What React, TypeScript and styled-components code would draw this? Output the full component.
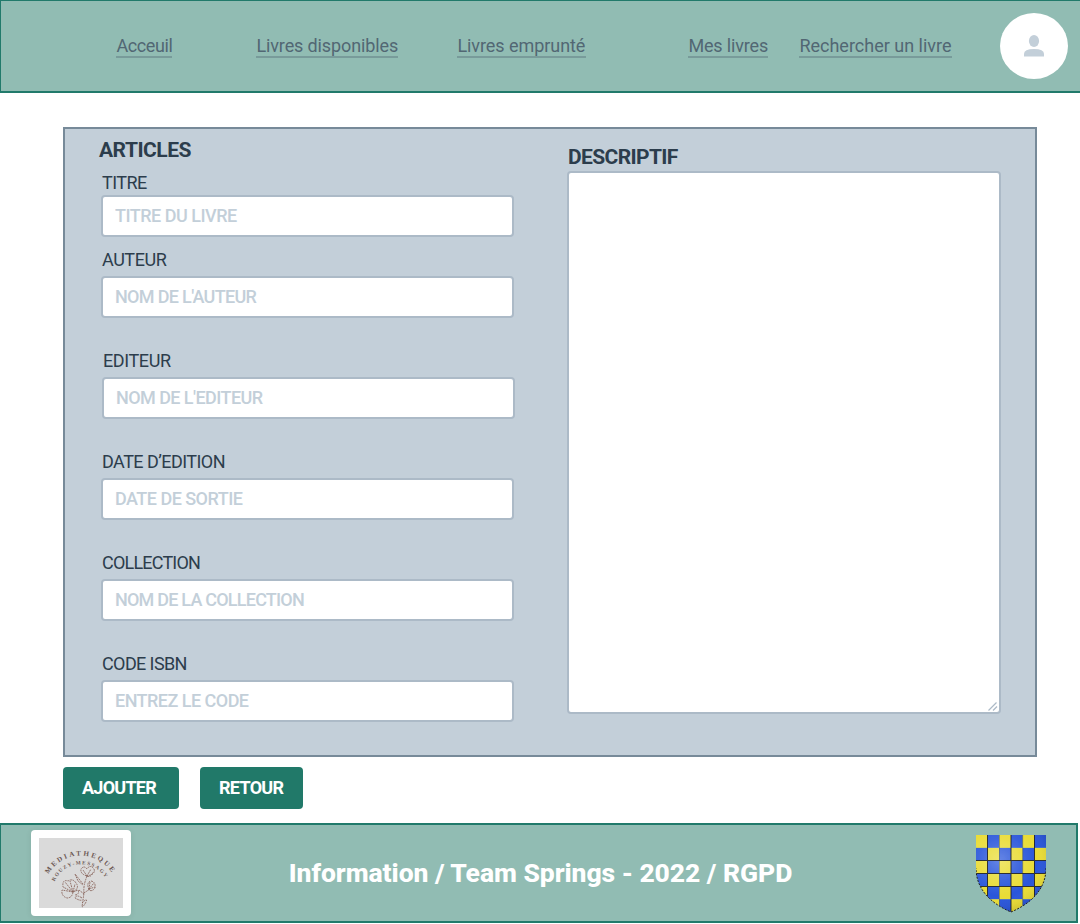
import React, { useId } from 'react';
import styled, { createGlobalStyle } from 'styled-components';

const GlobalStyle = createGlobalStyle`
  *, *::before, *::after { box-sizing: border-box; }
  body { margin: 0; background: #fff; overflow: hidden; font-family: Roboto, "Liberation Sans", sans-serif; color: #2c3d4c; }
`;

const Page = styled.div`
  display: flex;
  flex-direction: column;
  width: 1080px;
  height: 924px;
  overflow: hidden;
`;

const Header = styled.header`
  display: flex;
  align-items: flex-start;
  flex: none;
  height: 93px;
  padding-left: 115px;
  background: #91bcb3;
  border: solid #217a6b;
  border-width: 1px 0 2px 1px;
`;

const NavLink = styled.a<{ $width: number; $gap: number; $spacing: number }>`
  flex: none;
  width: ${p => p.$width}px;
  height: 24px;
  margin-top: 33px;
  margin-right: ${p => p.$gap}px;
  border-bottom: 2px solid #789b9a;
  font-size: 18px;
  line-height: 24px;
  letter-spacing: ${p => p.$spacing}px;
  text-indent: 0.4px;
  white-space: nowrap;
  color: #526773;
`;

const Avatar = styled.div`
  display: flex;
  flex: none;
  align-items: center;
  justify-content: center;
  width: 68px;
  height: 66px;
  margin-top: 12px;
  border-radius: 50%;
  background: #fff;
`;

const Panel = styled.main`
  display: flex;
  flex: none;
  width: 974px;
  height: 630px;
  margin: 34px 0 0 63px;
  border: 2px solid #778a99;
  background: #c3cfd9;
`;

const FormColumn = styled.section`
  width: 413px;
  margin: 8px 53px 0 36px;
`;

const DescriptionColumn = styled.section`
  width: 434px;
  padding-top: 15px;
`;

const Heading = styled.h2<{ $spacing: number; $indent?: number }>`
  margin: 0 0 0 ${p => p.$indent ?? 0}px;
  height: 27px;
  font-size: 21px;
  font-weight: 700;
  line-height: 27px;
  letter-spacing: ${p => p.$spacing}px;
`;

const Field = styled.div<{ $gap: number; $indent?: number }>`
  margin: ${p => p.$gap}px 0 0 ${p => p.$indent ?? 0}px;
`;

const Label = styled.label<{ $pad: number; $spacing: number }>`
  display: block;
  height: 24px;
  padding: 0 0 0 1px;
  margin-bottom: ${p => p.$pad}px;
  font-size: 18px;
  line-height: 24px;
  letter-spacing: ${p => p.$spacing}px;
`;

const Input = styled.input<{ $spacing: number }>`
  display: block;
  width: 413px;
  height: 42px;
  padding: 0 12px 2px;
  border: 2px solid #acbac7;
  border-radius: 4px;
  background: #fff;
  font: 500 18px Roboto, "Liberation Sans", sans-serif;
  letter-spacing: ${p => p.$spacing}px;
  &::placeholder { color: #c3cfd9; opacity: 1; }
`;

const Description = styled.textarea`
  display: block;
  width: 434px;
  height: 543px;
  border: 2px solid #acbac7;
  border-radius: 4px;
  background: #fff;
  resize: none;
`;

const DescriptionBox = styled.div`
  position: relative;
`;

const Grip = styled.svg`
  position: absolute;
  right: 3px;
  bottom: 3px;
`;

const Actions = styled.div`
  display: flex;
  flex: none;
  gap: 21px;
  height: 42px;
  margin: 10px 0 0 63px;
`;

const Button = styled.button<{ $width: number; $spacing: number }>`
  width: ${p => p.$width}px;
  padding: 0 0 2px 19px;
  text-align: left;
  border: 0;
  border-radius: 4px;
  background: #217969;
  color: #fff;
  font: 700 18px Roboto, "Liberation Sans", sans-serif;
  letter-spacing: ${p => p.$spacing}px;
`;

const Footer = styled.footer`
  display: grid;
  flex: none;
  grid-template-columns: 100px 1fr 70px;
  align-items: start;
  width: 1078px;
  height: 100px;
  margin-top: 14px;
  padding: 5px 30px 0 30px;
  border: 2px solid #217a6b;
  border-left-width: 1px;
  background: #91bcb3;
`;

const LogoCard = styled.div`
  width: 100px;
  height: 86px;
  padding: 8px;
  border-radius: 4px;
  background: #fff;
  box-shadow: 0 1px 6px rgba(0, 0, 0, 0.08);
`;

const LogoImage = styled.svg`
  display: block;
`;

const FooterText = styled.p`
  margin: 26px 0 0;
  padding-right: 26px;
  text-align: center;
  font-size: 26.5px;
  font-weight: 800;
  line-height: 34px;
  letter-spacing: -0.05px;
  white-space: nowrap;
  color: #fff;
`;

const ShieldSlot = styled.div`
  margin-top: 5px;
`;

const links = [
  { text: 'Acceuil', width: 56, gap: 84, spacing: -0.4 },
  { text: 'Livres disponibles', width: 142, gap: 59, spacing: -0.12 },
  { text: 'Livres emprunté', width: 129, gap: 102, spacing: -0.06 },
  { text: 'Mes livres', width: 80, gap: 31, spacing: -0.15 },
  { text: 'Rechercher un livre', width: 153, gap: 48, spacing: 0 },
];

const fields = [
  { label: 'TITRE', hint: 'TITRE DU LIVRE', gap: 7, pad: 0, ls: -0.55, hs: -0.5 },
  { label: 'AUTEUR', hint: "NOM DE L'AUTEUR", gap: 11, pad: 4, ls: -0.45, hs: -0.67 },
  { label: 'EDITEUR', hint: "NOM DE L'EDITEUR", gap: 31, pad: 4, indent: 1, ls: -0.4, hs: -0.56 },
  { label: 'DATE D’EDITION', hint: 'DATE DE SORTIE', gap: 31, pad: 4, ls: -0.55, hs: -0.52 },
  { label: 'COLLECTION', hint: 'NOM DE LA COLLECTION', gap: 31, pad: 4, ls: -0.8, hs: -0.78 },
  { label: 'CODE ISBN', hint: 'ENTREZ LE CODE', gap: 31, pad: 4, ls: -0.6, hs: -0.53 },
];

function PersonIcon() {
  return (
    <svg width="20" height="22" viewBox="0 0 20 22" fill="#c3cfd9">
      <ellipse cx="10" cy="6" rx="5.1" ry="5.9" />
      <path d="M0 21.6V19Q0 14 10 14Q20 14 20 19V21.6Z" />
    </svg>
  );
}

function MediathequeLogo() {
  const id = useId();
  return (
    <LogoImage width="84" height="70" viewBox="0 0 84 70">
      <rect width="84" height="70" fill="#dadada" />
      <path id={id + 'a'} d="M9.500 36A37 37 0 0 1 73.500 36" fill="none" />
      <path id={id + 'b'} d="M15.500 43.500A29 29 0 0 1 67.500 41.500" fill="none" />
      <g fontFamily="Liberation Serif, serif" fontWeight="700" fill="#6b5752">
        <text fontSize="7"><textPath href={'#' + id + 'a'} textLength="75">MEDIATHEQUE</textPath></text>
        <text fontSize="5.2"><textPath href={'#' + id + 'b'} textLength="62">ROUZY-MESSAGY</textPath></text>
      </g>
      <g fill="none" stroke="#8a675e" strokeWidth=".9" strokeLinecap="butt" strokeDasharray="1.8 .8">
        <path d="M34 54L24 49Q23 41 29 43Q34 40 37 45Q41 50 34 54ZM34 54L26 44M34 54L31 43M34 54L36 46M34 54L23 52Q22 58 28 60Q33 60 34 54M34 54L39 52Q41 56 36 57" />
        <path d="M48 38Q41 36 42 31Q45 27 48 31Q51 26 55 31Q57 36 48 38ZM48 38L44 32M48 38L52 31M48 38Q52 40 54 34" />
        <path d="M48 38Q44 48 45 55Q44 62 43 69M45 55Q48 53 51 51M45 56L40 52M44 46L36 36L39 43L44 47M43 60Q37 56 36 60Q41 63 43 62M43 65Q49 59 47 64Q45 68 43 69" />
        <path d="M50 52Q47 44 52 43Q57 44 56 50Q53 54 50 52ZM50 51L55 45M50 51L51 44M50 51L56 49" />
      </g>
    </LogoImage>
  );
}

function Shield() {
  const id = useId();
  const x = [0, 11.6, 23.3, 35, 46.7, 58.4, 70];
  const y = [0, 12.9, 25.7, 38.6, 51.4, 64.3, 77];
  const cells = [];
  for (let r = 0; r < 6; r++) {
    for (let c = 0; c < 6; c++) {
      cells.push(
        <rect key={`${r}-${c}`} x={x[c]} y={y[r]} width={x[c + 1] - x[c]} height={y[r + 1] - y[r]} fill={(r + c) % 2 ? '#2b57da' : '#e9dc37'} />,
      );
    }
  }
  return (
    <svg width="70" height="78" viewBox="0 0 70 78">
      <defs>
        <clipPath id={id + 'c'}><path d="M0 0H70V33C70 55 54 69 35 77C16 69 0 55 0 33Z" /></clipPath>
        <radialGradient id={id + 'g'} gradientUnits="userSpaceOnUse" cx="24" cy="25" r="52">
          <stop offset="0" stopColor="#fff" stopOpacity=".28" />
          <stop offset=".4" stopColor="#fff" stopOpacity=".1" />
          <stop offset=".7" stopColor="#fff" stopOpacity="0" />
          <stop offset="1" stopColor="#000" stopOpacity=".1" />
        </radialGradient>
      </defs>
      <g clipPath={`url(#${id}c)`}>
        {cells}
        <rect width="70" height="78" fill={`url(#${id}g)`} />
        <path d="M11.5 0V78M35 0V78M58.5 0V78M0 25.5H70M0 38.5H70M0 51.5H70" stroke="#1d1c20" strokeWidth="1" opacity=".85" />
        <path d="M23.5 0V78M46.7 0V78" stroke="#222" strokeWidth=".7" opacity=".45" />
      </g>
      <path d="M70 33C70 55 54 69 35 77C16 69 0 55 0 33" fill="none" stroke="#222" strokeWidth="1" strokeDasharray="2 1.4" />
    </svg>
  );
}

export default function App() {
  return (
    <Page>
      <GlobalStyle />
      <Header>
        {links.map(l => (
          <NavLink key={l.text} $width={l.width} $gap={l.gap} $spacing={l.spacing}>{l.text}</NavLink>
        ))}
        <Avatar><PersonIcon /></Avatar>
      </Header>
      <Panel>
        <FormColumn>
          <Heading $spacing={-0.5} $indent={-2}>ARTICLES</Heading>
          {fields.map(f => (
            <Field key={f.label} $gap={f.gap} $indent={f.indent}>
              <Label $pad={f.pad} $spacing={f.ls}>{f.label}</Label>
              <Input $spacing={f.hs} placeholder={f.hint} />
            </Field>
          ))}
        </FormColumn>
        <DescriptionColumn>
          <Heading $spacing={-0.62} $indent={1}>DESCRIPTIF</Heading>
          <DescriptionBox>
            <Description />
            <Grip width="10" height="9" viewBox="0 0 10 9" stroke="#acbac7" strokeWidth="1.2" fill="none"><path d="M.5 8.500L8.500 .5M5 8.500L9 4.500" /></Grip>
          </DescriptionBox>
        </DescriptionColumn>
      </Panel>
      <Actions>
        <Button $width={116} $spacing={-0.75}>AJOUTER</Button>
        <Button $width={103} $spacing={-0.7}>RETOUR</Button>
      </Actions>
      <Footer>
        <LogoCard><MediathequeLogo /></LogoCard>
        <FooterText>Information / Team Springs - 2022 / RGPD</FooterText>
        <ShieldSlot><Shield /></ShieldSlot>
      </Footer>
    </Page>
  );
}
